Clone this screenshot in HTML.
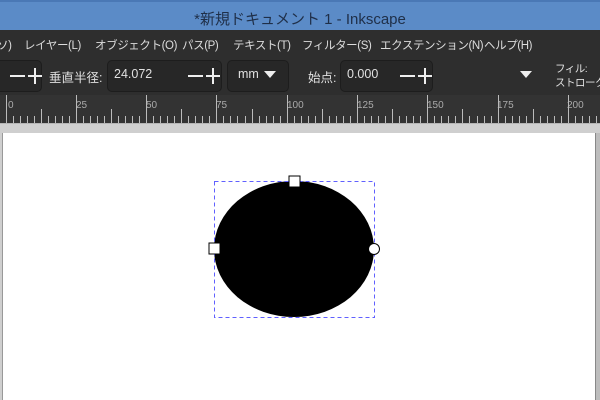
<!DOCTYPE html>
<html><head><meta charset="utf-8"><style>
*{margin:0;padding:0;box-sizing:border-box}
body{width:600px;height:400px;overflow:hidden;background:#fff;position:relative;font-family:"Liberation Sans","Noto Sans CJK JP",sans-serif}
.a{position:absolute;white-space:nowrap}
#title{left:0;top:0;width:600px;height:30px;background:#5b8bc7;border-top:2px solid #4a78b5}
#title span{position:absolute;left:0;width:600px;text-align:center;top:6px;font-size:15px;color:#1f2f48}
#menu{left:0;top:30px;width:600px;height:27px;background:#2e2e2e;color:#dcdcdc;font-size:11.5px;letter-spacing:-0.4px}
#menu span{position:absolute;top:7px}
#tool{left:0;top:57px;width:600px;height:38px;background:#2e2e2e;color:#e0e0e0;font-size:12.5px}
.box{position:absolute;top:3px;height:32px;background:#272727;border:1px solid #1d1d1d;border-radius:5px}
.pm{position:absolute;top:9px}
#ruler{left:0;top:95px;width:600px;height:28px;background:#333}
#gray{left:0;top:123px;width:600px;height:10px;background:#cfcfcf;border-top:1px solid #b5b5b5}
</style></head><body>
<div class="a" id="title"><span>*新規ドキュメント 1 - Inkscape</span></div>
<div class="a" id="menu">
<span style="left:-3px">ソ)</span>
<span style="left:24px">レイヤー(L)</span>
<span style="left:95px">オブジェクト(O)</span>
<span style="left:182px">パス(P)</span>
<span style="left:233px">テキスト(T)</span>
<span style="left:302px">フィルター(S)</span>
<span style="left:380px">エクステンション(N)</span>
<span style="left:484px">ヘルプ(H)</span>
</div>
<div class="a" id="tool">
<div class="box" style="left:-10px;width:52px"></div>
<svg class="pm" style="left:9px" width="34" height="20"><path d="M1 10H16M19 10H33M26 2V18" stroke="#eee" stroke-width="2"/></svg>
<span class="a" style="left:49px;top:10px">垂直半径:</span>
<div class="box" style="left:107px;width:115px"></div>
<span class="a" style="left:114px;top:10px">24.072</span>
<svg class="pm" style="left:187px" width="34" height="20"><path d="M1 10H16M19 10H33M26 2V18" stroke="#eee" stroke-width="2"/></svg>
<div class="box" style="left:227px;width:62px"></div>
<span class="a" style="left:238px;top:10px">mm</span>
<svg class="a" style="left:264px;top:14px" width="12" height="8"><path d="M0 0H12L6 7Z" fill="#eee"/></svg>
<span class="a" style="left:308px;top:10px">始点:</span>
<div class="box" style="left:340px;width:93px"></div>
<span class="a" style="left:347px;top:10px">0.000</span>
<svg class="pm" style="left:399px" width="34" height="20"><path d="M1 10H16M19 10H33M26 2V18" stroke="#eee" stroke-width="2"/></svg>
<svg class="a" style="left:520px;top:14px" width="12" height="8"><path d="M0 0H12L6 7Z" fill="#eee"/></svg>
<span class="a" style="left:555px;top:4px;font-size:10.5px;letter-spacing:-0.5px">フィル:</span>
<span class="a" style="left:555px;top:18px;font-size:10.5px;letter-spacing:-0.5px">ストローク:</span>
</div>
<div class="a" id="ruler">
<svg width="600" height="28" style="position:absolute;left:0;top:0">
<g fill="#aaa" font-size="10" font-family="Liberation Sans,sans-serif">
<text x="8" y="13">0</text><text x="76" y="13">25</text><text x="146" y="13">50</text><text x="216" y="13">75</text><text x="287" y="13">100</text><text x="357" y="13">125</text><text x="427" y="13">150</text><text x="497" y="13">175</text><text x="567" y="13">200</text>
</g>
<path id="tk" stroke="#bbb" fill="none" d=""/>
</svg>
</div>
<div class="a" id="gray"></div>
<div class="a" style="left:0;top:133px;width:3px;height:267px;background:#cfcfcf;border-right:1px solid #999"></div>
<div class="a" style="left:595px;top:133px;width:5px;height:267px;background:#bdbdbd;border-left:1px solid #888"></div>
<svg class="a" style="left:0;top:0" width="600" height="400">
<ellipse cx="294" cy="249" rx="80" ry="68" fill="#000"/>
<rect x="214.5" y="181.5" width="160" height="136" fill="none" stroke="#6060ff" stroke-width="1" stroke-dasharray="4,3"/>
<rect x="289" y="176" width="11" height="11" fill="#fff" stroke="#000"/>
<rect x="209" y="243" width="11" height="11" fill="#fff" stroke="#000"/>
<circle cx="374" cy="249" r="5.5" fill="#fff" stroke="#000"/>
</svg>
<script>
var d="";for(var i=-2;i<90;i++){var x=Math.round(5.5+i*7.03)+0.5;var m=((i%10)+10)%10;var h=m==0?28:(m==5?14:7);d+="M"+x+" "+(28-h)+"V28";}
document.getElementById("tk").setAttribute("d",d);
</script>
</body></html>
